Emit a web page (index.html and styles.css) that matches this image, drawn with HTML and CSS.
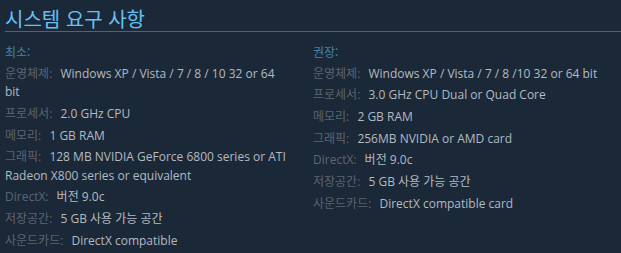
FILE: index.html
```html
<!DOCTYPE html>
<html lang="ko">
<head>
<meta charset="utf-8">
<link rel="stylesheet" href="styles.css">
</head>
<body>
<div class="sysreq">
  <h2 class="title">시스템 요구 사항</h2>
  <div class="cols">
    <div class="col col-min">
      <div class="head">최소:</div>
      <ul class="list">
        <li><span class="lbl">운영체제:</span> Windows XP / Vista / 7 / 8 / 10 32 or 64 bit</li>
        <li><span class="lbl">프로세서:</span> 2.0 GHz CPU</li>
        <li><span class="lbl">메모리:</span> 1 GB RAM</li>
        <li><span class="lbl">그래픽:</span> 128 MB NVIDIA GeForce 6800 series or ATI Radeon X800 series or equivalent</li>
        <li><span class="lbl">DirectX:</span> 버전 9.0c</li>
        <li><span class="lbl">저장공간:</span> 5 GB 사용 가능 공간</li>
        <li><span class="lbl">사운드카드:</span> DirectX compatible</li>
      </ul>
    </div>
    <div class="col col-rec">
      <div class="head">권장:</div>
      <ul class="list">
        <li><span class="lbl">운영체제:</span> Windows XP / Vista / 7 / 8 /10 32 or 64 bit</li>
        <li><span class="lbl">프로세서:</span> 3.0 GHz CPU Dual or Quad Core</li>
        <li><span class="lbl">메모리:</span> 2 GB RAM</li>
        <li><span class="lbl">그래픽:</span> 256MB NVIDIA or AMD card</li>
        <li><span class="lbl">DirectX:</span> 버전 9.0c</li>
        <li><span class="lbl">저장공간:</span> 5 GB 사용 가능 공간</li>
        <li><span class="lbl">사운드카드:</span> DirectX compatible card</li>
      </ul>
    </div>
  </div>
</div>
</body>
</html>
```
FILE: styles.css
```css
html, body {
  margin: 0;
  padding: 0;
  background: #1b2838;
}
.sysreq {
  padding: 7px 0 0 5px;
  font-family: "Open Sans", "Noto Sans CJK KR", sans-serif;
  font-size: 12px;
  color: #b3bac1;
}
.title {
  margin: 0;
  font-family: "Noto Sans CJK KR", sans-serif;
  font-size: 20px;
  font-weight: normal;
  line-height: 24px;
  color: #66c0f4;
  border-bottom: 1px solid #3a6a8a;
}
.cols {
  display: flex;
  gap: 21px;
  margin-top: 11px;
}
.col-min {
  width: 287px;
  flex: none;
}
.col-rec {
  flex: 1;
}
.head {
  color: #4582a5;
  font-family: "Noto Sans CJK KR", sans-serif;
  line-height: 18.5px;
  margin-bottom: 3.2px;
}
.list {
  list-style: none;
  margin: 0;
  padding: 0;
}
.list li {
  line-height: 18.5px;
  margin-bottom: 3.2px;
}
.lbl {
  color: #5b6571;
  margin-right: 5px;
}
```
